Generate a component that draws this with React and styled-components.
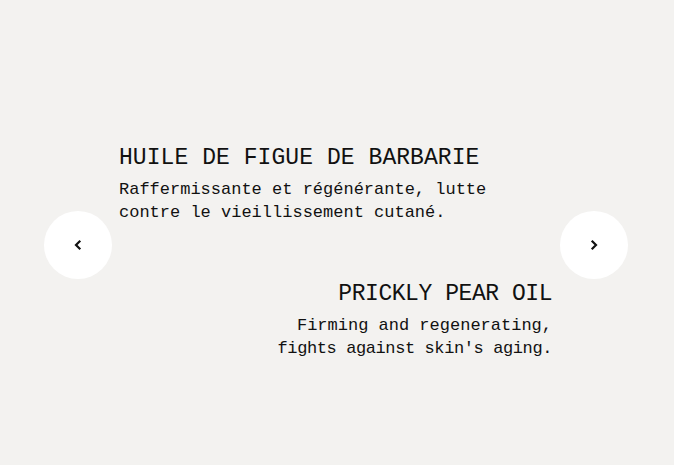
import React from "react";
import styled, { createGlobalStyle } from "styled-components";

const Global = createGlobalStyle`
  html, body { margin: 0; padding: 0; }
  body {
    background: #f3f2f0;
    font-family: "Liberation Mono", "DejaVu Sans Mono", monospace;
    color: #111111;
  }
`;

const Page = styled.div`
  width: 674px;
  height: 465px;
  display: flex;
  align-items: center;
  padding: 24px 46px 0 44px;
  box-sizing: border-box;
`;

const Arrow = styled.button`
  flex: 0 0 68px;
  width: 68px;
  height: 68px;
  border-radius: 50%;
  border: none;
  background: #ffffff;
  display: flex;
  align-items: center;
  justify-content: center;
  padding: 0;
  cursor: pointer;
  color: #111;
`;

const Slides = styled.div`
  flex: 1;
  display: flex;
  flex-direction: column;
  gap: 56px;
  padding: 0 8px 0 7px;
  margin-top: 14px;
`;

const Slide = styled.div`
  display: flex;
  flex-direction: column;
  align-items: ${(p) => (p.$right ? "flex-end" : "flex-start")};
  text-align: ${(p) => (p.$right ? "right" : "left")};
`;

const Title = styled.h2`
  margin: 0 0 6px;
  font-weight: 400;
  font-size: 23px;
  line-height: 28px;
  letter-spacing: ${(p) => p.$tracking || "0"};
  white-space: nowrap;
`;

const Text = styled.p`
  margin: 0;
  font-size: 17px;
  line-height: 23px;
`;

const Line = styled.span`
  display: block;
  white-space: nowrap;
  letter-spacing: ${(p) => p.$tracking || "0"};
`;

const Chevron = ({ dir }) => (
  <svg width="12" height="12" viewBox="0 0 12 12" fill="none">
    <path
      d={dir === "left" ? "M7.5 2.5 L4 6 L7.5 9.5" : "M4.5 2.5 L8 6 L4.5 9.5"}
      stroke="currentColor"
      strokeWidth="2.2"
      strokeLinecap="square"
    />
  </svg>
);

export default function App() {
  return (
    <>
      <Global />
      <Page>
        <Arrow aria-label="Précédent">
          <Chevron dir="left" />
        </Arrow>
        <Slides>
          <Slide>
            <Title $tracking="0.06px">HUILE DE FIGUE DE BARBARIE</Title>
            <Text>
              <Line>Raffermissante et régénérante, lutte</Line>
              <Line>contre le vieillissement cutané.</Line>
            </Text>
          </Slide>
          <Slide $right>
            <Title $tracking="-0.45px">PRICKLY PEAR OIL</Title>
            <Text>
              <Line>Firming and regenerating,</Line>
              <Line $tracking="-0.4px">fights against skin's aging.</Line>
            </Text>
          </Slide>
        </Slides>
        <Arrow aria-label="Suivant">
          <Chevron dir="right" />
        </Arrow>
      </Page>
    </>
  );
}
